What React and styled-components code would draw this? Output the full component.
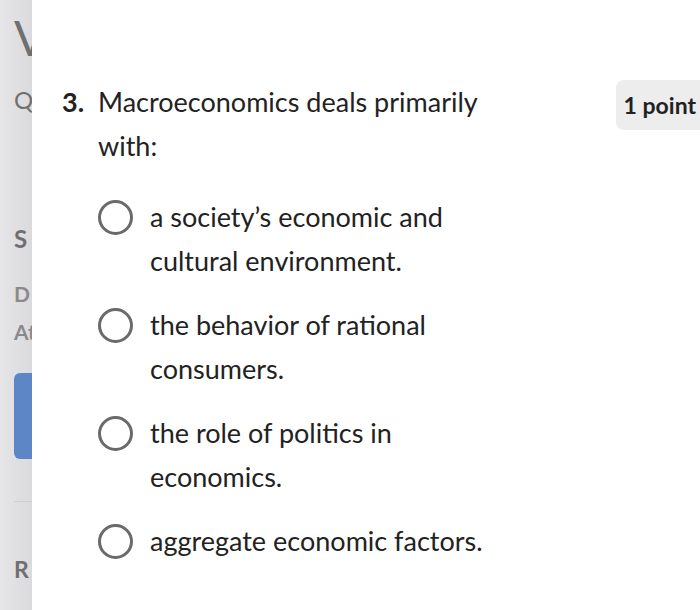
import styled, { createGlobalStyle } from 'styled-components'

const GlobalStyle = createGlobalStyle`
  html, body {
    margin: 0;
    padding: 0;
    background: #ffffff;
    overflow: hidden;
  }
  body {
    font-family: Lato, "Open Sans", sans-serif;
    color: #222222;
  }
`

const Page = styled.div`
  display: flex;
  width: 700px;
  height: 610px;
  overflow: hidden;
`

const Sidebar = styled.aside`
  flex: 0 0 32px;
  width: 32px;
  height: 610px;
  overflow: hidden;
  background: linear-gradient(to right, #e6e6e8, #dadadc);
  padding-left: 14px;
  box-sizing: border-box;
  display: flex;
  flex-direction: column;
  color: #6f6f72;
`

const SideText = styled.div`
  white-space: nowrap;
  font-size: ${p => p.size || 22}px;
  font-weight: ${p => (p.bold ? 700 : 400)};
  color: ${p => p.color || '#6f6f72'};
  margin-top: ${p => p.top || 0}px;
  line-height: 1;
`

const SideButton = styled.div`
  margin-top: ${p => p.top}px;
  width: 40px;
  height: 86px;
  border-radius: 6px;
  background: #5d86c6;
`

const SideRule = styled.div`
  margin-top: 42px;
  height: 1px;
  width: 40px;
  background: #cfcfd2;
`

const Main = styled.main`
  flex: 1;
  padding: 80px 0 0 30px;
  min-width: 0;
`

const QuestionRow = styled.div`
  display: flex;
  align-items: flex-start;
`

const Number = styled.span`
  flex: 0 0 36px;
  font-size: 27px;
  font-weight: 700;
  line-height: 44px;
`

const QuestionText = styled.div`
  flex: 1;
  font-size: 27px;
  line-height: 44px;
  max-width: 400px;
`

const Badge = styled.div`
  margin-left: auto;
  margin-right: -8px;
  flex: 0 0 auto;
  background: #ededee;
  border-radius: 8px;
  padding: 4px 12px 4px 8px;
  font-size: 23px;
  font-weight: 700;
  line-height: 42px;
  white-space: nowrap;
`

const Options = styled.ul`
  list-style: none;
  margin: 27px 0 0 36px;
  padding: 0;
  display: flex;
  flex-direction: column;
  gap: 20px;
`

const Option = styled.li`
  display: flex;
  align-items: flex-start;
`

const Radio = styled.span`
  flex: 0 0 auto;
  width: 29px;
  height: 29px;
  border: 3px solid #6a6a6a;
  border-radius: 50%;
  margin-top: 5px;
  margin-right: 17px;
`

const OptionText = styled.span`
  font-size: 27px;
  line-height: 44px;
  max-width: 350px;
`

const options = [
  'a society’s economic and cultural environment.',
  'the behavior of rational consumers.',
  'the role of politics in economics.',
  'aggregate economic factors.'
]

export default function App () {
  return (
    <>
      <GlobalStyle />
      <Page>
        <Sidebar>
          <SideText size={48} top={14}>V</SideText>
          <SideText size={24} top={26}>Q</SideText>
          <SideText size={24} bold top={115}>S</SideText>
          <SideText size={21} bold top={32} color='#8a8a8d'>D</SideText>
          <SideText size={21} bold top={17} color='#8a8a8d'>At</SideText>
          <SideButton top={31} />
          <SideRule />
          <SideText size={23} bold top={56}>R</SideText>
        </Sidebar>
        <Main>
          <QuestionRow>
            <Number>3.</Number>
            <QuestionText>Macroeconomics deals primarily with:</QuestionText>
            <Badge>1 point</Badge>
          </QuestionRow>
          <Options>
            {options.map(text => (
              <Option key={text}>
                <Radio />
                <OptionText>{text}</OptionText>
              </Option>
            ))}
          </Options>
        </Main>
      </Page>
    </>
  )
}
